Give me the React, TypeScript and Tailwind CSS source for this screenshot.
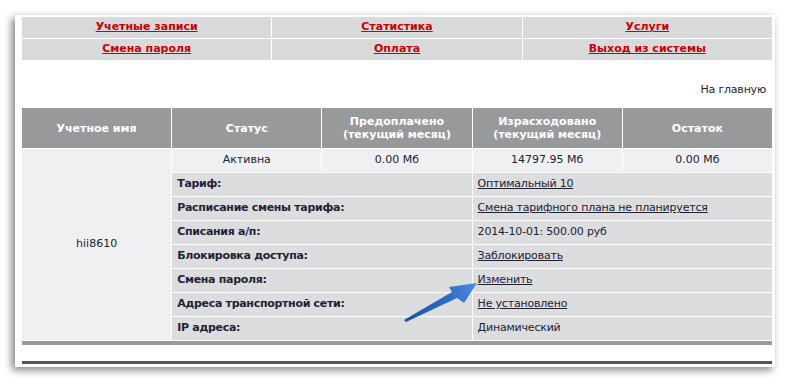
import React from "react";

const navLinks = [
  ["Учетные записи", "Статистика", "Услуги"],
  ["Смена пароля", "Оплата", "Выход из системы"],
];

type Detail = { label: string; value: string; link?: boolean };

const details: Detail[] = [
  { label: "Тариф:", value: "Оптимальный 10", link: true },
  { label: "Расписание смены тарифа:", value: "Смена тарифного плана не планируется", link: true },
  { label: "Списания а/п:", value: "2014-10-01: 500.00 руб" },
  { label: "Блокировка доступа:", value: "Заблокировать", link: true },
  { label: "Смена пароля:", value: "Изменить", link: true },
  { label: "Адреса транспортной сети:", value: "Не установлено", link: true },
  { label: "IP адреса:", value: "Динамический" },
];

// Синяя стрелка-указатель поверх таблицы
const Arrow: React.FC = () => (
  <svg
    className="absolute left-0 top-0 pointer-events-none"
    width={791}
    height={388}
    viewBox="0 0 791 388"
  >
    <defs>
      <linearGradient id="arrowGrad" x1="405" y1="320" x2="476" y2="283" gradientUnits="userSpaceOnUse">
        <stop offset="0" stopColor="#1d4f9e" />
        <stop offset="0.6" stopColor="#2d6cc6" />
        <stop offset="1" stopColor="#4a8ee0" />
      </linearGradient>
    </defs>
    <polygon
      points="404,320 452,292 449,287 477,283 464,303 457,298 406,322"
      fill="url(#arrowGrad)"
    />
  </svg>
);

export default function App() {
  return (
    <div className="relative w-[791px] h-[388px] bg-white overflow-hidden font-['DejaVu_Sans',Verdana,sans-serif] text-[11px] text-[#222233]">
      <div className="pt-[15px] pl-[15px]">
        <div className="w-[760px] h-[352px] bg-white shadow-[-3px_3px_8px_rgba(0,0,0,0.5)] pt-[2px] pl-[7px] pr-[3px]">
          {/* Верхнее меню */}
          <div className="grid grid-cols-3 gap-px bg-white w-[750px]">
            {navLinks.flat().map((item) => (
              <div key={item} className="h-[21px] bg-[#d8d9db] flex items-center justify-center">
                <a className="font-bold text-[#cc0000] underline cursor-pointer">{item}</a>
              </div>
            ))}
          </div>

          <div className="h-[48px] flex items-center justify-end pr-[6px] pt-[12px] tracking-[-0.2px]">
            <span>На главную</span>
          </div>

          {/* Таблица учетной записи */}
          <div className="grid grid-cols-5 gap-px bg-white w-[750px] grid-rows-[40px_repeat(8,23px)]">
            {["Учетное имя", "Статус", "Предоплачено\n(текущий месяц)", "Израсходовано\n(текущий месяц)", "Остаток"].map((h) => (
              <div
                key={h}
                className="bg-[#98999b] text-white font-bold flex items-center justify-center text-center whitespace-pre-line leading-[13px]"
              >
                {h}
              </div>
            ))}

            <div className="row-span-8 bg-[#eff0f2] flex items-center justify-center">hii8610</div>
            <div className="bg-[#eff0f2] flex items-center justify-center">Активна</div>
            <div className="bg-[#eff0f2] flex items-center justify-center">0.00 Мб</div>
            <div className="bg-[#eff0f2] flex items-center justify-center">14797.95 Мб</div>
            <div className="bg-[#eff0f2] flex items-center justify-center">0.00 Мб</div>

            {details.map((d) => (
              <React.Fragment key={d.label}>
                <div className="col-span-2 bg-[#dcdddf] flex items-center pl-[5px] font-bold tracking-[-0.3px]">{d.label}</div>
                <div className="col-span-2 bg-[#dcdddf] flex items-center pl-[5px] tracking-[-0.2px]">
                  {d.link ? <a className="underline cursor-pointer">{d.value}</a> : d.value}
                </div>
              </React.Fragment>
            ))}
          </div>
          <div className="mt-px h-[4px] w-[750px] bg-[#98999b]" />
          <div className="mt-[16px] h-[3px] w-[750px] bg-[#555558]" />
        </div>
      </div>
      <Arrow />
    </div>
  );
}
